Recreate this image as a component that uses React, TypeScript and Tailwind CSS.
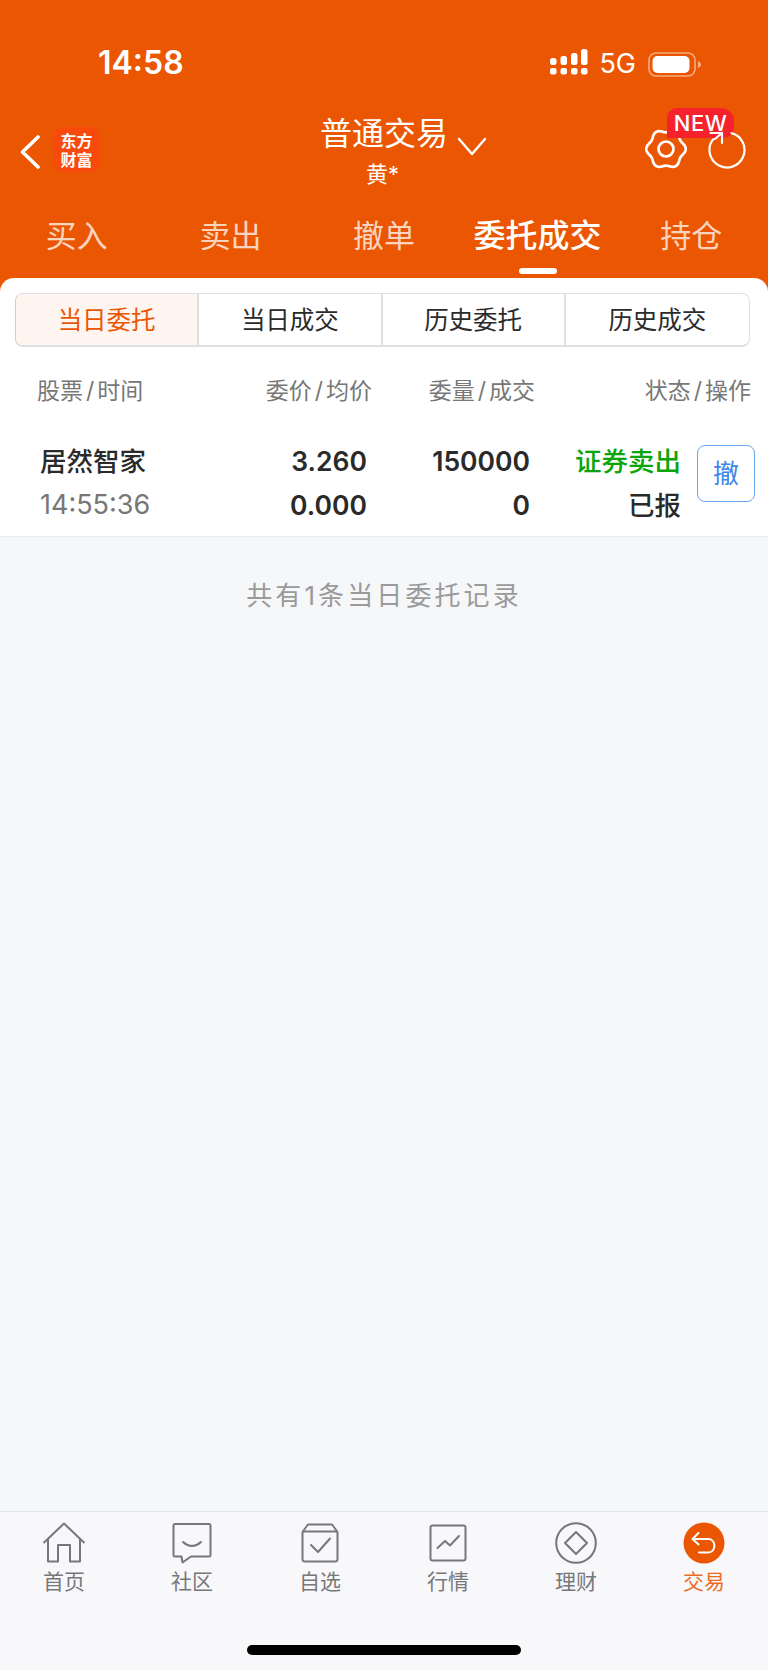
import React from "react";

function Signal() {
  return (
    <svg width="38" height="26" viewBox="0 0 38 26" fill="white">
      <rect x="0" y="19" width="6.5" height="6.5" rx="2" />
      <rect x="10.5" y="19" width="6.5" height="6.5" rx="2" />
      <rect x="21" y="19" width="6.5" height="6.5" rx="2" />
      <rect x="31" y="19" width="6.5" height="6.5" rx="2" />
      <rect x="0" y="9" width="6.5" height="7" rx="2.5" />
      <rect x="10.5" y="7" width="6.5" height="9" rx="2.5" />
      <rect x="21" y="4" width="6.5" height="12" rx="2.5" />
      <rect x="31" y="0" width="6.5" height="16" rx="2.5" />
    </svg>
  );
}

function Battery() {
  return (
    <svg width="54" height="25" viewBox="0 0 54 25">
      <rect x="1" y="1" width="46" height="23" rx="7" fill="none" stroke="white" strokeOpacity="0.5" strokeWidth="1.6" />
      <rect x="4.5" y="4" width="37" height="17" rx="5" fill="white" />
      <path d="M50 9 q3 1.5 3 3.5 t-3 3.5z" fill="white" fillOpacity="0.55" />
    </svg>
  );
}

function gearPath() {
  const pts: string[] = [];
  for (let i = 0; i < 180; i++) {
    const a = (i / 180) * Math.PI * 2;
    const r = 18.2 + 1.5 * Math.cos(6 * a);
    pts.push(`${(22 + r * Math.cos(a)).toFixed(2)} ${(22 + r * Math.sin(a)).toFixed(2)}`);
  }
  return "M" + pts.join(" L") + "Z";
}

function Gear() {
  return (
    <svg width="44" height="44" viewBox="0 0 44 44" fill="none" stroke="white" strokeWidth="2.7" strokeLinejoin="round">
      <path d={gearPath()} />
      <circle cx="22" cy="22" r="7.5" />
    </svg>
  );
}

function Refresh() {
  return (
    <svg width="40" height="40" viewBox="0 0 40 40" fill="none" stroke="white" strokeWidth="2.2" strokeLinecap="round">
      <path d="M24.5 3.1 A17.5 17.5 0 1 1 6.3 9.1" />
      <path d="M3.5 3 H15 V13 M15 3 L8 9" />
    </svg>
  );
}

function NavIcon({ name }: { name: string }) {
  const stroke = "#77777a";
  if (name === "home")
    return (
      <svg width="44" height="42" viewBox="0 0 44 42" fill="none" stroke={stroke} strokeWidth="2">
        <path d="M1.5 21 L22 1.5 L42.5 21" strokeLinejoin="round" />
        <path d="M6 17 V39.5 H16 V23 H28 V39.5 H38 V17" strokeLinejoin="round" />
      </svg>
    );
  if (name === "chat")
    return (
      <svg width="40" height="42" viewBox="0 0 40 42" fill="none" stroke={stroke} strokeWidth="2">
        <path d="M3 2 H37 a1.5 1.5 0 0 1 1.5 1.5 V33 a1.5 1.5 0 0 1 -1.5 1.5 H19 L10.5 40.5 L9.5 34.5 H3 a1.5 1.5 0 0 1 -1.5 -1.5 V3.5 A1.5 1.5 0 0 1 3 2Z" strokeLinejoin="round" />
        <path d="M11 20 Q20 28 29 20" strokeLinecap="round" />
      </svg>
    );
  if (name === "check")
    return (
      <svg width="38" height="40" viewBox="0 0 38 40" fill="none" stroke={stroke} strokeWidth="2">
        <path d="M1.5 36 V9 L7 1.5 H31 L36.5 9 V36 a2.5 2.5 0 0 1 -2.5 2.5 H4 A2.5 2.5 0 0 1 1.5 36Z" strokeLinejoin="round" />
        <path d="M1.5 8.5 H36.5" />
        <path d="M10 22 L17 29 L29 15.5" strokeLinecap="round" strokeLinejoin="round" />
      </svg>
    );
  if (name === "chart")
    return (
      <svg width="38" height="38" viewBox="0 0 38 38" fill="none" stroke={stroke} strokeWidth="2">
        <rect x="1.5" y="1.5" width="35" height="35" rx="2" />
        <path d="M8.5 24 L16 17 L21 21.5 L30 12" strokeLinecap="round" strokeLinejoin="round" />
      </svg>
    );
  if (name === "diamond")
    return (
      <svg width="42" height="42" viewBox="0 0 42 42" fill="none" stroke={stroke} strokeWidth="2">
        <circle cx="21" cy="21" r="19.8" />
        <path d="M21 10 L32 21 L21 32 L10 21Z" strokeLinejoin="round" />
      </svg>
    );
  return (
    <svg width="42" height="42" viewBox="0 0 42 42" fill="none">
      <circle cx="21" cy="21" r="20.5" fill="#eb5602" />
      <path d="M15.5 11 L9.5 17 L15.5 22.5 M10 17 H25 C33.5 17 33.5 30.5 25 30.5 H16" stroke="white" strokeWidth="2" strokeLinecap="round" strokeLinejoin="round" />
    </svg>
  );
}

function Slashed({ a, b }: { a: string; b: string }) {
  return (
    <>
      {a}
      <span className="mx-[3px]">/</span>
      {b}
    </>
  );
}

const tabs = ["买入", "卖出", "撤单", "委托成交", "持仓"];
const segments = ["当日委托", "当日成交", "历史委托", "历史成交"];
const nav = [
  ["home", "首页"],
  ["chat", "社区"],
  ["check", "自选"],
  ["chart", "行情"],
  ["diamond", "理财"],
  ["back", "交易"],
];

export default function App() {
  return (
    <div className="flex h-[1670px] w-[768px] flex-col overflow-hidden bg-[#f6f7f9] font-['Inter','Noto_Sans_CJK_SC',sans-serif]">
      <header className="h-[278px] shrink-0 bg-[#eb5602] text-white">
        <div className="flex h-[108px] items-start pt-[44px]">
          <span className="ml-[98px] text-[32px] leading-[38px] font-semibold">14:58</span>
          <div className="ml-auto mr-[66px] mt-[5px] flex items-center">
            <span className="-mt-[4px]"><Signal /></span>
            <span className="ml-[11px] text-[27px] leading-[30px]">5G</span>
            <span className="ml-[12px]"><Battery /></span>
          </div>
        </div>
        <div className="grid h-[84px] grid-cols-[1fr_auto_1fr]">
          <div className="flex items-start pt-[25px] pl-[20px]">
            <svg width="20" height="34" viewBox="0 0 20 34" fill="none" className="mt-[2px]" stroke="white" strokeWidth="3.6" strokeLinecap="round" strokeLinejoin="round">
              <path d="M18 2 L2.5 17 L18 32" />
            </svg>
            <div className="ml-[14px] -mt-[6px] flex h-[45px] w-[45px] flex-col items-center justify-center rounded-[9px] bg-[#f84a0c] text-[16px] leading-[19px] font-bold font-['Noto_Sans_CJK_SC',sans-serif]">
              <span>东方</span>
              <span>财富</span>
            </div>
          </div>
          <div className="flex items-start">
            <div className="w-[39px]" />
            <div className="flex flex-col items-center">
              <span className="mt-[3px] text-[32px] leading-[46px]">普通交易</span>
              <span className="mt-[4px] -ml-[3px] text-[22px] leading-[26px]">黄*</span>
            </div>
            <svg width="30" height="20" viewBox="0 0 30 20" fill="none" className="ml-[9px] mt-[29px]" stroke="white" strokeWidth="2.4" strokeLinecap="round" strokeLinejoin="round">
              <path d="M2 2 L15 17 L28 2" />
            </svg>
          </div>
          <div className="relative flex items-start justify-end pt-[19px] pr-[21px]">
            <Gear />
            <span className="absolute top-0 right-[34px] flex h-[30px] w-[67px] items-center justify-center rounded-tl-[10px] rounded-tr-[13px] rounded-br-[10px] bg-[#f5222d] text-[22px] font-medium tracking-[0.5px]">NEW</span>
            <span className="relative ml-[19px] mt-[3px]"><Refresh /></span>
          </div>
        </div>
        <nav className="flex h-[86px] items-start pt-[22px]">
          {tabs.map((t, i) => (
            <div key={t} className="flex flex-1 flex-col items-center">
              <span className={i === 3 ? "text-[32px] leading-[44px] font-medium text-white" : "text-[31px] leading-[44px] text-white/75"}>{t}</span>
              {i === 3 && <span className="mt-[-6px] h-[6px] w-[38px] translate-y-[16px] rounded-full bg-white" />}
            </div>
          ))}
        </nav>
      </header>

      <div className="shrink-0 bg-[#eb5602]">
        <section className="h-[259px] rounded-t-[14px] border-b border-[#ececf0] bg-white">
          <div className="ml-[15px] mr-[18px] grid h-[54px] translate-y-[15px] grid-cols-4 overflow-hidden rounded-[8px] border border-b-2 border-[#dfe0e6] border-l-[#f3c3a8]">
            {segments.map((s, i) => (
              <div
                key={s}
                className={
                  i === 0
                    ? "flex items-center justify-center border-r-2 border-[#dfe0e6] bg-[#fef4f0] pt-[1px] text-[24.5px] text-[#eb5602]"
                    : i === 3
                      ? "flex items-center justify-center pt-[1px] text-[24.5px] text-[#2b2b2b]"
                      : "flex items-center justify-center border-r-2 border-[#dfe0e6] pt-[1px] text-[24.5px] text-[#2b2b2b]"
                }
              >
                {s}
              </div>
            ))}
          </div>
          <div className="mt-[42px] flex h-[34px] items-center text-[23px] text-[#777]">
            <span className="w-[258px] pl-[37px]"><Slashed a="股票" b="时间" /></span>
            <span className="w-[114px] text-right"><Slashed a="委价" b="均价" /></span>
            <span className="w-[163px] text-right"><Slashed a="委量" b="成交" /></span>
            <span className="w-[216px] text-right"><Slashed a="状态" b="操作" /></span>
          </div>
          <div className="mt-[31px] flex items-start">
            <div className="flex w-[240px] flex-col pl-[40px]">
              <span className="text-[26.5px] leading-[44px] font-medium text-[#2a2a2a]">居然智家</span>
              <span className="text-[27px] leading-[44px] text-[#777]">14:55:36</span>
            </div>
            <div className="flex w-[127px] flex-col text-right text-[26.5px] leading-[44px] font-semibold text-[#2a2a2a]">
              <span>3.260</span>
              <span>0.000</span>
            </div>
            <div className="flex w-[163px] flex-col text-right text-[26.5px] leading-[44px] font-semibold text-[#2a2a2a]">
              <span>150000</span>
              <span>0</span>
            </div>
            <div className="flex w-[151px] flex-col text-right text-[26.5px] leading-[44px] font-medium">
              <span className="text-[#0aa50a]">证券卖出</span>
              <span className="text-[#2a2a2a]">已报</span>
            </div>
            <div className="ml-[16px] mt-[6px] flex h-[57px] w-[58px] items-center justify-center rounded-[8px] border border-[#6aa5f0] text-[26px] text-[#3c86e8]">撤</div>
          </div>
        </section>
      </div>

      <p className="mt-[39px] text-center text-[26px] leading-[40px] tracking-[3.1px] text-[#9a9a9a]">共有1条当日委托记录</p>

      <footer className="mt-auto h-[159px] shrink-0 border-t border-[#e2e2e8] bg-[#f8f8fb]">
        <div className="grid grid-cols-6">
          {nav.map(([icon, label]) => (
            <div key={label} className="flex flex-col items-center pt-[9px]">
              <div className="flex h-[44px] items-center justify-center"><NavIcon name={icon} /></div>
              <span className={icon === "back" ? "mt-[2px] text-[21px] leading-[30px] text-[#ee6a1e]" : "mt-[2px] text-[21px] leading-[30px] text-[#77777a]"}>{label}</span>
            </div>
          ))}
        </div>
        <div className="mx-auto mt-[48px] h-[10px] w-[274px] rounded-full bg-black" />
      </footer>
    </div>
  );
}
